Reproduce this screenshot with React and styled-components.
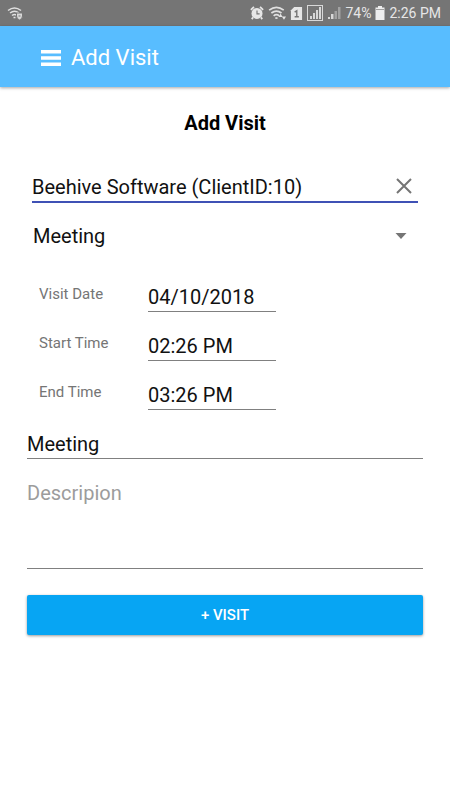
import React, { useState } from "react";
import styled, { createGlobalStyle } from "styled-components";

const App = () => {
  const [client, setClient] = useState("Beehive Software (ClientID:10)");
  const [date, setDate] = useState("04/10/2018");
  const [start, setStart] = useState("02:26 PM");
  const [end, setEnd] = useState("03:26 PM");
  const [subject, setSubject] = useState("Meeting");
  const [description, setDescription] = useState("");

  return (
    <>
      <GlobalStyle />
      <StatusBar>
        <StatusIcon viewBox="0 0 16 16" $size={16}>
          <WifiArcs />
          <path
            d="M9.5 8h6v3q0 3-3 4q-3-1-3-4z"
            fill="#d8d8d8"
            stroke="#757575"
          />
          <path d="M11.500 11h2" stroke="#757575" />
        </StatusIcon>
        <StatusGroup>
          <StatusIcon viewBox="0 0 16 16" $size={14}>
            <circle cx="8" cy="8.500" r="6.300" fill="#e6e6e6" />
            <path
              d="M1 4.500l3.500-3.500M15 4.500l-3.500-3.500M3.500 13l-1.500 2M12.500 13l1.500 2"
              stroke="#e6e6e6"
              strokeWidth="2"
            />
            <path d="M8 5v4h3" fill="none" stroke="#757575" strokeWidth="1.300" />
          </StatusIcon>
          <StatusIcon viewBox="0 0 16 16" $size={18}>
            <WifiArcs />
            <path d="M9.500 11.500l1.700-3 1.700 3zM12.300 11H16l-1.800 3z" fill="#e6e6e6" />
          </StatusIcon>
          <StatusIcon viewBox="0 0 12 14" $size={13}>
            <path d="M3.500 0H12v14H0V3.500z" fill="#e6e6e6" />
            <path
              d="M4 5.500l2.300-1.500v7M4 10.500h4.500"
              fill="none"
              stroke="#757575"
              strokeWidth="1.500"
            />
          </StatusIcon>
          <StatusIcon viewBox="0 0 16 16" $size={16}>
            <rect x="0.500" y="0.500" width="15" height="15" fill="none" stroke="#d8d8d8" />
            <path d="M3 11h2v3H3zM6 8h2v6H6zM9 5h2v9H9zM12 2h2v12h-2z" fill="#d8d8d8" />
          </StatusIcon>
          <StatusIcon viewBox="0 0 14 14" $size={14}>
            <path d="M1 11h2v2H1zM4 8h2.500v5H4z" fill="#d8d8d8" />
            <path d="M7.500 5H10v8H7.500zM11 1h2.500v12H11z" fill="#a2a2a2" />
          </StatusIcon>
          <StatusText>74%</StatusText>
          <StatusIcon viewBox="0 0 10 14" $size={14} $narrow>
            <path d="M3 0h4v1.500h2.500V14h-9V1.500H3z" fill="#eeeeee" />
            <path d="M1 3.500h8" stroke="#a0a0a0" />
          </StatusIcon>
          <StatusText>2:26 PM</StatusText>
        </StatusGroup>
      </StatusBar>
      <Header>
        <MenuButton type="button" aria-label="Menu">
          <svg viewBox="0 0 20 16" width="20" height="16" fill="#fff">
            <path d="M0 0h20v3.500H0zM0 6.300h20v3.500H0zM0 12.500h20V16H0z" />
          </svg>
        </MenuButton>
        <HeaderTitle>Add Visit</HeaderTitle>
      </Header>
      <Form onSubmit={(e) => e.preventDefault()}>
        <Title>Add Visit</Title>
        <ClientField>
          <Input
            $bare
            aria-label="Client"
            value={client}
            onChange={(e) => setClient(e.target.value)}
          />
          <ClearButton type="button" aria-label="Clear" onClick={() => setClient("")}>
            <svg viewBox="0 0 16 16" width="16" height="16" stroke="#757575">
              <path d="M1 1l14 14M15 1L1 15" strokeWidth="2" />
            </svg>
          </ClearButton>
        </ClientField>
        <SelectField>
          <Select aria-label="Visit type" defaultValue="Meeting">
            <option>Meeting</option>
          </Select>
          <svg viewBox="0 0 12 6" width="12" height="6" fill="#757575">
            <path d="M0.500 0h11L6 6z" />
          </svg>
        </SelectField>
        <Times>
          <Label htmlFor="date">Visit Date</Label>
          <Input id="date" value={date} onChange={(e) => setDate(e.target.value)} />
          <Label htmlFor="start">Start Time</Label>
          <Input id="start" value={start} onChange={(e) => setStart(e.target.value)} />
          <Label htmlFor="end">End Time</Label>
          <Input id="end" value={end} onChange={(e) => setEnd(e.target.value)} />
        </Times>
        <Input
          aria-label="Subject"
          value={subject}
          onChange={(e) => setSubject(e.target.value)}
        />
        <TextArea
          aria-label="Description"
          placeholder="Descripion"
          value={description}
          onChange={(e) => setDescription(e.target.value)}
        />
        <SubmitButton type="submit">+ VISIT</SubmitButton>
      </Form>
    </>
  );
};

const WifiArcs = () => (
  <g fill="none" stroke="#e0e0e0" strokeWidth="1.500">
    <path d="M1 5.500q6.500-5 13 0" />
    <path d="M3 8q4.500-3.500 9 0" />
    <path d="M5 10.500q2.500-2 5 0" />
    <path d="M6.500 12.500h2" />
  </g>
);

const GlobalStyle = createGlobalStyle`
  * {
    box-sizing: border-box;
  }
  body {
    margin: 0;
    background-color: #fff;
    color: #111;
    font-family: Roboto, sans-serif;
  }
  button, input, select, textarea {
    font-family: inherit;
    color: inherit;
    margin: 0;
    padding: 0;
    border: none;
    border-radius: 0;
    background: none;
    outline: none;
  }
  svg {
    display: block;
    flex-shrink: 0;
  }
`;

const StatusBar = styled.div`
  display: flex;
  align-items: center;
  justify-content: space-between;
  height: 26px;
  padding: 0 9px 0 7px;
  background-color: #757575;
`;

const StatusGroup = styled.div`
  display: flex;
  align-items: center;
  gap: 4px;
`;

const StatusIcon = styled.svg`
  width: ${({ $size, $narrow }) => ($narrow ? 10 : $size)}px;
  height: ${({ $size }) => $size}px;
`;

const StatusText = styled.span`
  color: #e6e6e6;
  font-size: 14px;
  line-height: 20px;
  white-space: nowrap;
`;

const Header = styled.header`
  display: flex;
  align-items: center;
  gap: 10px;
  height: 61px;
  padding: 2px 41px 0;
  background-color: #58bdff;
  box-shadow: 0 1px 3px rgba(0, 0, 0, 0.35);
`;

const MenuButton = styled.button`
  cursor: pointer;
`;

const HeaderTitle = styled.span`
  color: #fff;
  font-size: 22px;
  line-height: 28px;
`;

const Form = styled.form`
  display: flex;
  flex-direction: column;
  padding: 24px 27px;
`;

const Title = styled.h1`
  margin: 0;
  font-size: 20px;
  line-height: 24px;
  font-weight: bold;
  text-align: center;
  color: #000;
`;

const ClientField = styled.div`
  display: flex;
  align-items: center;
  margin: 36px 5px 0;
  padding-right: 6px;
  border-bottom: 2px solid #3f51b5;
`;

const Input = styled.input`
  width: 100%;
  min-width: 0;
  height: ${({ $bare }) => ($bare ? 30 : 32)}px;
  padding-top: 2px;
  font-size: 20px;
  line-height: 24px;
  border-bottom: ${({ $bare }) => ($bare ? "none" : "1px solid #808080")};
`;

const ClearButton = styled.button`
  cursor: pointer;
`;

const SelectField = styled.div`
  display: flex;
  align-items: center;
  margin: 13px 0 24px;
  padding: 0 16px 0 6px;
`;

const Select = styled.select`
  flex: 1;
  height: 40px;
  font-size: 20px;
  appearance: none;
`;

const Times = styled.div`
  display: grid;
  grid-template-columns: 109px 128px;
  row-gap: 17px;
  margin-bottom: 17px;
  padding-left: 12px;
`;

const Label = styled.label`
  color: #757575;
  font-size: 15px;
  line-height: 28px;
`;

const TextArea = styled.textarea`
  height: 92px;
  margin-top: 18px;
  padding: 4px 0;
  font-size: 20px;
  line-height: 24px;
  border-bottom: 1px solid #808080;
  resize: none;
  &::placeholder {
    color: #9c9c9c;
  }
`;

const SubmitButton = styled.button`
  height: 40px;
  margin-top: 26px;
  border-radius: 2px;
  background-color: #07a5f3;
  box-shadow: 0 1px 3px rgba(0, 0, 0, 0.4);
  color: #fff;
  font-size: 15px;
  font-weight: 500;
  cursor: pointer;
`;

export default App;
